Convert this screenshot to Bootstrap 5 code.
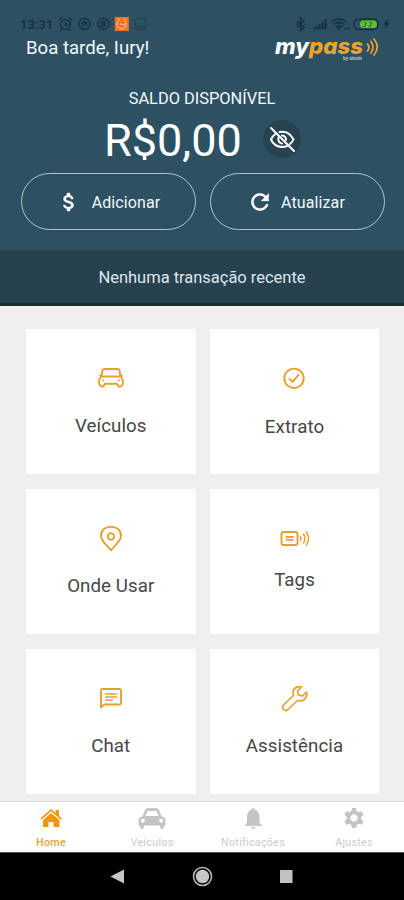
<!DOCTYPE html>
<html lang="pt-BR">
<head>
<meta charset="utf-8">
<meta name="viewport" content="width=device-width, initial-scale=1">
<title>mypass</title>
<link href="https://cdn.jsdelivr.net/npm/bootstrap@5.3.0/dist/css/bootstrap.min.css" rel="stylesheet">
<style>
body{font-family:Roboto,"Liberation Sans",sans-serif;background:#efefef;width:404px;height:900px;overflow:hidden}
svg{display:block;flex:none}
.hero{background:#2d5163;height:250px;color:#f3f7f9}
.status{height:34px;padding:15px 14px 0 20px;color:#162e3c}
.clock{font-size:13px;line-height:19px;width:33px;letter-spacing:.1px;font-weight:500}
.greet{height:28px;padding:0 24px 0 26px}
.hello{font-size:18.6px;line-height:29px}
.brand{width:107px;height:28px;overflow:visible}
.label-saldo{font-size:16.4px;line-height:20px;margin-top:27px;letter-spacing:0}
.amount-row{height:60px;padding-left:104px;gap:20.500px}
.amount{font-size:45px;line-height:62px;width:138px;white-space:nowrap;color:#fff;padding-top:3px}
.eye{width:38px;height:38px;background:#274350}
.actions{padding:0 19px 0 21px;gap:14px;margin-top:4px}
.pill{height:57px;border:1.5px solid #b4c3cb;border-radius:29px;color:#f3f7f9;font-size:16px;letter-spacing:.1px;flex:1 1 0}
.pill span{padding-top:2px}
.ico-cash{margin-right:11px}
.ico-reload{margin:0 8px 0 -3px}
.band{height:56px;background:#27414f;border-bottom:3px solid #1d2a31;color:#dde7ec;font-size:16.5px;line-height:56px;letter-spacing:-.02px}
.tiles{height:495px;padding:23px 25px 0 26px;overflow:hidden}
.tile-grid{display:grid;grid-template-columns:169.5px 169px;gap:15.5px 14.5px}
.tile{height:144.5px;background:#fff;color:#464646;font-size:18.7px;letter-spacing:.08px;padding-top:34px}
.tile svg{height:30px;width:34px;stroke:#e5a02e;fill:none;stroke-width:1.9;stroke-linejoin:round;stroke-linecap:round}
.tile span{line-height:24px;margin-top:21px}
.tile.up span{margin-top:15px}
.tile.down span{margin-top:22px}
.tabs{height:51px;background:#fff;border-top:1px solid #dcdcdc;color:#cbcbcb;font-size:10.8px;letter-spacing:.25px}
.tab svg{width:30px;height:24px;margin-top:4px;fill:#c4c4c4}
.tab span{line-height:14px;margin-top:5.500px;padding-left:1px}
.tab.on{color:#e3a53f;font-weight:500}
.tab.on svg{fill:#ee970c}
.sysbar{height:48px;background:#000;border-top:1px solid #555}
</style>
<script src="https://cdn.jsdelivr.net/npm/bootstrap@5.3.0/dist/js/bootstrap.bundle.min.js"></script>
</head>
<body class="d-flex flex-column">
<header class="hero">
  <div class="status d-flex justify-content-between">
    <div class="d-flex">
      <span class="clock">13:31</span>
      <svg width="96" height="18" fill="none" stroke="#162e3c" stroke-width="1.3">
        <circle cx="12.500" cy="9.500" r="4.800"/><path d="M6 5l3-2.500M19 5l-3-2.500M12.500 7v3h2M9 14l-1.500 1.500M16 14l1.500 1.500"/>
        <circle cx="31.500" cy="9" r="5.500"/><path d="M29 11.500l4.500-4.500M30 7h3.500v3.500M28.500 9l2-2"/>
        <circle cx="50.500" cy="9" r="5.500"/><path d="M48 7l4.500 4.500M49 7h3v4M47.500 10l2 2"/>
        <rect x="61.800" y="2" width="14" height="14" fill="#f47521" stroke="none"/>
        <path d="M66 5.500a4.600 4.600 0 1 0 6 .5M67 8.500l2 1.500 3-1M65 4l2 1M73 4l-2 1" stroke="#ffc79c" stroke-width="1"/>
        <rect x="82.500" y="3.500" width="10" height="10.500" rx="1" stroke="#25404f"/><path d="M82.500 11.500h10" stroke="#25404f"/>
      </svg>
    </div>
    <svg width="96" height="18" fill="none" stroke="#162e3c" stroke-width="1.300">
      <path d="M3 6l7 6.500-3.500 3V3L10 6l-7 6.500M2 9.300h2M10 9.300h2"/>
      <path d="M19.500 14.500v-1.500M22.500 14.500v-3.500M25.500 14.500V9M28.500 14.500V7M31.500 14.500V4" stroke-width="2"/>
      <path d="M37.500 7q7.500-6 15 0M40 9.500q5-4 10 0M42.500 11.500l2.500 2.500 2.500-2.500q-2.500-2-5 0zM51 13v2M54 12v3" stroke-width="1.400"/>
      <rect x="60" y="4" width="24" height="10.500" rx="5" stroke-width="1.500"/>
      <rect x="66" y="5.500" width="17" height="7.500" rx="3.500" fill="#62c229" stroke="none"/>
      <path d="M68.500 11.500h2.500l1-4h-2M74 11.500h2.500l1-4h-2.500" stroke="#2c7a26" stroke-width="1.200"/>
      <path d="M93.500 4l-4 6H92L91.500 14l4-6H93z" fill="#162e3c" stroke="none"/>
    </svg>
  </div>
  <div class="greet d-flex justify-content-between">
    <div class="hello">Boa tarde, Iury!</div>
    <svg class="brand" viewBox="0 0 107 28" role="img" aria-label="mypass">
      <text x="2" y="20" font-family="Inter,sans-serif" font-weight="800" font-style="italic" font-size="21.500" fill="#fff" textLength="88" lengthAdjust="spacingAndGlyphs">my<tspan fill="#eda32c">pass</tspan></text>
      <text x="70" y="25.500" fill="#cbd6dc" font-size="5" font-weight="500" textLength="19" lengthAdjust="spacingAndGlyphs">by sinoin</text>
      <g fill="none" stroke="#eda32c" stroke-width="1.700" stroke-linecap="round"><path d="M94.500 10q2.800 3.500 0 7M98 7.500q4 6 0 11.500M101 5q6.500 8 0 16"/></g>
    </svg>
  </div>
  <div class="label-saldo text-center">SALDO DISPONÍVEL</div>
  <div class="amount-row d-flex align-items-center">
    <div class="amount">R$0,00</div>
    <div class="eye rounded-circle d-flex align-items-center justify-content-center">
      <svg width="28" height="28" viewBox="0 0 28 28" fill="none" stroke="#fff" stroke-width="2" stroke-linecap="round"><path d="M8 8.500Q4.500 11 3 14.500Q6 21.500 14 22Q17 22 19.500 20.800M11.500 7Q20.500 5 25.500 14.500Q24.500 17 22 19M10.500 12.500Q9.500 17.500 14 18.500M14 10.500Q18 11 18 15"/><path d="M3 3L26 26"/></svg>
    </div>
  </div>
  <div class="actions d-flex">
    <button class="pill btn p-0 d-flex align-items-center justify-content-center">
      <svg class="ico-cash" width="24" height="24" viewBox="0 0 24 24" fill="#fff" stroke="#fff" stroke-width=".4"><path d="M11.800 10.900c-2.270-.59-3-1.200-3-2.150 0-1.090 1.010-1.850 2.700-1.850 1.780 0 2.440.85 2.500 2.100h2.210c-.07-1.720-1.120-3.300-3.210-3.810V3h-3v2.160c-1.940.42-3.500 1.680-3.500 3.610 0 2.310 1.910 3.460 4.700 4.130 2.500.6 3 1.480 3 2.410 0 .69-.49 1.790-2.700 1.790-2.060 0-2.870-.92-2.980-2.100h-2.200c.12 2.190 1.760 3.420 3.680 3.830V21h3v-2.150c1.950-.37 3.500-1.500 3.500-3.550 0-2.840-2.430-3.810-4.700-4.400z"/></svg>
      <span>Adicionar</span>
    </button>
    <button class="pill btn p-0 d-flex align-items-center justify-content-center">
      <svg class="ico-reload" width="26" height="26" viewBox="0 0 24 24" fill="#fff" stroke="#fff" stroke-width=".3"><path d="M17.650 6.350A7.960 7.960 0 0 0 12 4a8 8 0 1 0 7.730 10h-2.080A6 6 0 1 1 12 6c1.660 0 3.140.69 4.220 1.780L13 11h7V4z"/></svg>
      <span>Atualizar</span>
    </button>
  </div>
</header>
<div class="band text-center">Nenhuma transação recente</div>
<main class="tiles">
  <div class="tile-grid">
    <div class="tile d-flex flex-column align-items-center">
      <svg viewBox="0 0 34 30"><path d="M7.500 13.500L8.500 7.500Q9 6 10.500 6H23.500Q25 6 25.500 7.500L26.500 13.500M7.500 13.500H26.500L28.500 16Q29.500 19 28.500 22L26.500 23.500H24.500L23 20.800H11L9.500 23.500H7.500L5.500 22Q4.500 19 5.500 16zM6 12.500l1.500 1M28 12.500l-1.500 1"/><path d="M9 17.300h.5M24.500 17.300h.5" stroke-width="1.800"/></svg>
      <span>Veículos</span>
    </div>
    <div class="tile down d-flex flex-column align-items-center">
      <svg viewBox="0 0 34 30"><circle cx="16" cy="15.300" r="9.700"/><path d="M11.500 15.800l3 3 6-7"/></svg>
      <span>Extrato</span>
    </div>
    <div class="tile d-flex flex-column align-items-center">
      <svg viewBox="0 0 34 30"><path d="M17 27.300C13.500 22.800 7 18.300 7 12.800C7 6.800 11.500 3.700 17 3.700S27 6.800 27 12.800C27 18.300 20.500 22.800 17 27.300z"/><circle cx="17" cy="13.500" r="3.200"/></svg>
      <span>Onde Usar</span>
    </div>
    <div class="tile up d-flex flex-column align-items-center">
      <svg viewBox="0 0 34 30"><rect x="3.500" y="9" width="16" height="13" rx="2"/><path d="M8.500 14h6.500M8.500 16.800h6.500" stroke-width="1.800"/><path d="M22.500 13.500q1.200 2 0 4M25.500 11q2.800 4.500 0 9M28.500 9q4 6.500 0 13" stroke-width="1.500"/></svg>
      <span>Tags</span>
    </div>
    <div class="tile d-flex flex-column align-items-center">
      <svg viewBox="0 0 34 30"><path d="M7 24.500V7.500Q7 6 8.500 6H25.500Q27 6 27 7.500V20Q27 21.500 25.500 21.500H10z"/><path d="M11.500 11h11M11.500 14h11M11.500 17h7" stroke-width="1.400"/></svg>
      <span>Chat</span>
    </div>
    <div class="tile d-flex flex-column align-items-center">
      <svg viewBox="0 0 34 30"><path d="M23.500 4Q18 2.500 15.500 7Q14.500 9.500 15.500 12.500L5.500 22Q3.500 24.500 5.500 26.500T10 26.500L19.500 17.500Q23.500 19 27 16Q29.500 13 28.500 9L24.500 13L20.500 12L19.500 8z" stroke-width="1.700"/></svg>
      <span>Assistência</span>
    </div>
  </div>
</main>
<nav class="tabs row g-0">
  <div class="tab on col-3 d-flex flex-column align-items-center">
    <svg viewBox="0 0 30 24"><path d="M4.500 12.300L15 3l4.500 4V4H23v6l3 2.500-1.200 1.300L15 5.300 5.700 13.600z"/><path d="M7 14l8-7 8.500 7v7H17.500v-5h-5v5H7z"/></svg>
    <span>Home</span>
  </div>
  <div class="tab col-3 d-flex flex-column align-items-center">
    <svg viewBox="0 0 30 24"><path fill-rule="evenodd" d="M5.500 10.500L8 4Q8.700 2 11 2h8q2.300 0 3 2l2.500 6.500Q28.500 11 28.500 14v5.500H27V21q0 2-2 2t-2-2v-1.500H7V21q0 2-2 2t-2-2v-1.500H1.500V14Q1.500 11 5.500 10.500zM8.500 10h13L19.500 5h-9zM6 12.800a2 2 0 1 0 .01 0zM24 12.800a2 2 0 1 0 .01 0z"/></svg>
    <span>Veículos</span>
  </div>
  <div class="tab col-3 d-flex flex-column align-items-center">
    <svg viewBox="0 0 30 24"><path d="M15 2q1.500 0 1.500 1.500Q21.500 5 21.500 11v5.500L24 20H6.500L9 16.500V11Q9 5 13.500 3.500 13.500 2 15 2zM13 21h4.500q-.5 2-2.300 2T13 21z"/></svg>
    <span>Notificações</span>
  </div>
  <div class="tab col-3 d-flex flex-column align-items-center">
    <svg viewBox="0 0 30 24"><path fill-rule="evenodd" d="M13 2h4l.6 3 2 1.200 3-1 2 3.500-2.400 2.100v2.400l2.400 2.100-2 3.500-3-1-2 1.200-.6 3h-4l-.6-3-2-1.200-3 1-2-3.500 2.400-2.100v-2.400L5.400 8.700l2-3.500 3 1 2-1.200zM15 8.300a3.700 3.700 0 1 0 .01 0z"/></svg>
    <span>Ajustes</span>
  </div>
</nav>
<footer class="sysbar">
  <svg width="404" height="47"><path d="M110.500 23.500L124 16.500V30.500z" fill="#c6c6c6"/><circle cx="202.500" cy="23.500" r="9" fill="none" stroke="#b5b5b5" stroke-width="1.600"/><circle cx="202.500" cy="23.500" r="6.700" fill="#c6c6c6"/><path d="M280 17h12.500v13H280z" fill="#c2c2c2"/></svg>
</footer>
</body>
</html>
